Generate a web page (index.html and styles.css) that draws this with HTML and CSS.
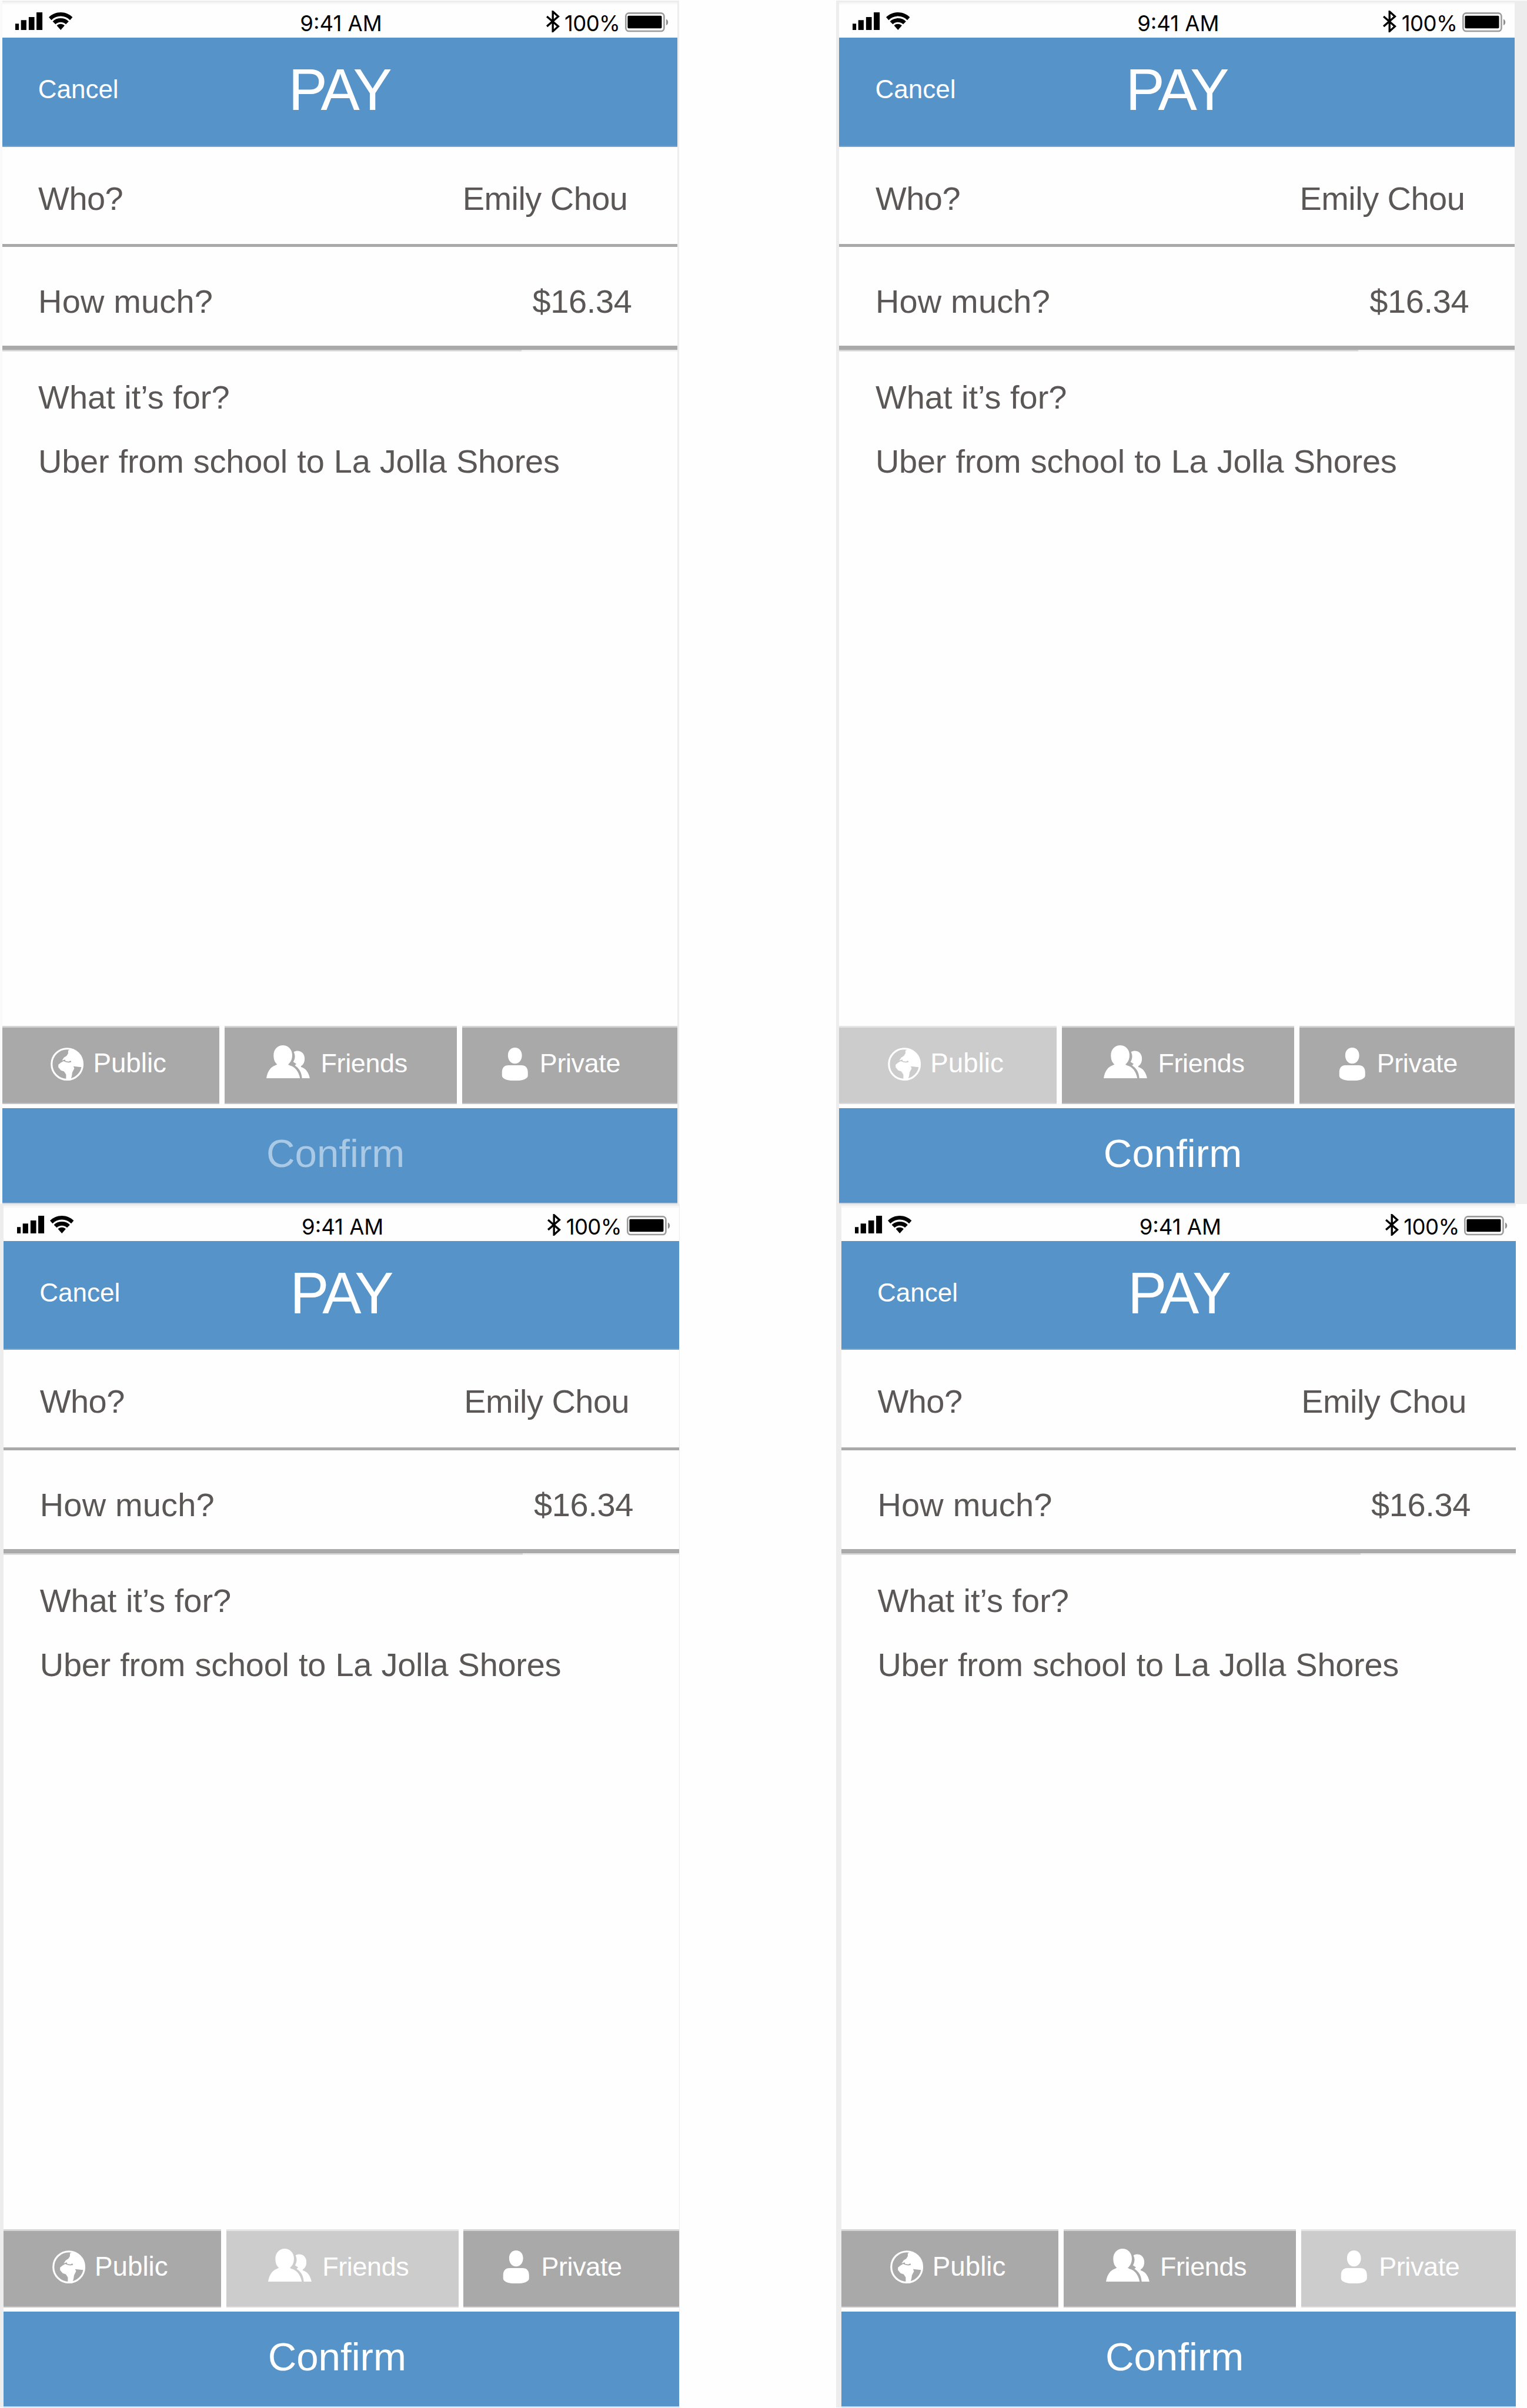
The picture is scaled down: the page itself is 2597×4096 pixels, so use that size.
FILE: index.html
```html
<!DOCTYPE html>
<html lang="en">
<head>
<meta charset="utf-8">
<title>Pay</title>
<link rel="stylesheet" href="styles.css">
</head>
<body>
<svg class="defs" aria-hidden="true">
  <symbol id="signal" viewBox="0 0 53 34"><path d="M0 22h7v12H0zM11 15h10.500v19H11zM26 9h11v25H26zM41 0h11.500v34H41z"/></symbol>
  <symbol id="wifi" viewBox="0 0 46 34"><path d="M23 0C14 0 6 3.500 0 9.500l5 5.500C10 10 16 7.500 23 7.500S36 10 41 15l5-5.500C40 3.500 32 0 23 0zM23 11.500c-6 0-11.500 2-15.500 6l5.500 5.500c2.500-2.500 6-4 10-4s7.500 1.500 10 4l5.500-5.500c-4-4-9.500-6-15.500-6zM23 22.500c-3 0-5.500 1-7.500 3L23 34l7.500-8.500c-2-2-4.500-3-7.500-3z"/></symbol>
  <symbol id="bluetooth" viewBox="0 0 30 44"><path d="M3 12l23 20-11 10V2l11 10L3 32" fill="none" stroke="currentColor" stroke-width="4"/></symbol>
  <symbol id="battery" viewBox="0 0 84 38"><rect x="1.500" y="1.500" width="74" height="35" rx="6" fill="none" stroke="#9b9b9b" stroke-width="3"/><rect x="5" y="6.500" width="66" height="24.500" rx="2"/><path d="M79.500 13c5 2 5 10 0 12z" fill="#8e8e8e"/></symbol>
  <symbol id="globe" viewBox="0 0 64 64"><circle cx="32" cy="32" r="30" fill="none" stroke="currentColor" stroke-width="3.600"/><path d="M34 6v5l-3 5-5 3-4 6 6-2 1 3 6 1 4-2 1 3-5 1-5-1-5-2-5 3-5 4v5l5 6 6 2 4 6v11h8l3-8 1-7 4-8-2-4 8 1 10 1A30 30 0 0 0 38 3z"/></symbol>
  <symbol id="friends" viewBox="0 0 86 64"><path d="M53 13c8-5 21-1 21 13 0 7-3 12-7 14v2c9 2 15 11 17 22H69c-1-9-3-15-9-21l-5-4 3-3-6-4c4-6 4-13 1-19z"/><path d="M32 0c10 0 18 8 18 19 0 8-3 14-8 18l3 2c10 2 18 12 20 25H0c2-13 8-22 17-25l4-2c-5-4-7-10-7-18C14 8 22 0 32 0z"/></symbol>
  <symbol id="person" viewBox="0 0 54 64"><path d="M27 0c8 0 13.500 6 13.500 15S35 31 27 31s-13.500-7-13.500-16S19 0 27 0zM15 34h24c9 0 13 5 13 14v6c0 6-9 10-25 10S2 60 2 54v-6c0-9 4-14 13-14z"/></symbol>
</svg>
<main class="board">
  <div class="cell cell-a">
    <section class="phone">
      <div class="status"><svg class="signal"><use href="#signal"/></svg><svg class="wifi"><use href="#wifi"/></svg><span class="time">9:41 AM</span><svg class="bluetooth"><use href="#bluetooth"/></svg><span class="charge">100%</span><svg class="battery"><use href="#battery"/></svg></div>
      <header class="header"><a class="cancel">Cancel</a><h1 class="title">PAY</h1></header>
      <div class="row who"><span>Who?</span><span>Emily Chou</span></div>
      <div class="row amount"><span>How much?</span><span>$16.34</span></div>
      <div class="note"><p class="ask">What it’s for?</p><p class="answer">Uber from school to La Jolla Shores</p></div>
      <div class="tabs">
        <div class="tab public"><svg><use href="#globe"/></svg><span>Public</span></div>
        <div class="tab friends"><svg><use href="#friends"/></svg><span>Friends</span></div>
        <div class="tab private"><svg><use href="#person"/></svg><span>Private</span></div>
      </div>
      <div class="confirm disabled">Confirm</div>
    </section>
  </div>
  <div class="cell cell-b">
    <section class="phone">
      <div class="status"><svg class="signal"><use href="#signal"/></svg><svg class="wifi"><use href="#wifi"/></svg><span class="time">9:41 AM</span><svg class="bluetooth"><use href="#bluetooth"/></svg><span class="charge">100%</span><svg class="battery"><use href="#battery"/></svg></div>
      <header class="header"><a class="cancel">Cancel</a><h1 class="title">PAY</h1></header>
      <div class="row who"><span>Who?</span><span>Emily Chou</span></div>
      <div class="row amount"><span>How much?</span><span>$16.34</span></div>
      <div class="note"><p class="ask">What it’s for?</p><p class="answer">Uber from school to La Jolla Shores</p></div>
      <div class="tabs">
        <div class="tab public selected"><svg><use href="#globe"/></svg><span>Public</span></div>
        <div class="tab friends"><svg><use href="#friends"/></svg><span>Friends</span></div>
        <div class="tab private"><svg><use href="#person"/></svg><span>Private</span></div>
      </div>
      <div class="confirm">Confirm</div>
    </section>
  </div>
  <div class="cell cell-c">
    <section class="phone">
      <div class="status"><svg class="signal"><use href="#signal"/></svg><svg class="wifi"><use href="#wifi"/></svg><span class="time">9:41 AM</span><svg class="bluetooth"><use href="#bluetooth"/></svg><span class="charge">100%</span><svg class="battery"><use href="#battery"/></svg></div>
      <header class="header"><a class="cancel">Cancel</a><h1 class="title">PAY</h1></header>
      <div class="row who"><span>Who?</span><span>Emily Chou</span></div>
      <div class="row amount"><span>How much?</span><span>$16.34</span></div>
      <div class="note"><p class="ask">What it’s for?</p><p class="answer">Uber from school to La Jolla Shores</p></div>
      <div class="tabs">
        <div class="tab public"><svg><use href="#globe"/></svg><span>Public</span></div>
        <div class="tab friends selected"><svg><use href="#friends"/></svg><span>Friends</span></div>
        <div class="tab private"><svg><use href="#person"/></svg><span>Private</span></div>
      </div>
      <div class="confirm">Confirm</div>
    </section>
  </div>
  <div class="cell cell-d">
    <section class="phone">
      <div class="status"><svg class="signal"><use href="#signal"/></svg><svg class="wifi"><use href="#wifi"/></svg><span class="time">9:41 AM</span><svg class="bluetooth"><use href="#bluetooth"/></svg><span class="charge">100%</span><svg class="battery"><use href="#battery"/></svg></div>
      <header class="header"><a class="cancel">Cancel</a><h1 class="title">PAY</h1></header>
      <div class="row who"><span>Who?</span><span>Emily Chou</span></div>
      <div class="row amount"><span>How much?</span><span>$16.34</span></div>
      <div class="note"><p class="ask">What it’s for?</p><p class="answer">Uber from school to La Jolla Shores</p></div>
      <div class="tabs">
        <div class="tab public"><svg><use href="#globe"/></svg><span>Public</span></div>
        <div class="tab friends"><svg><use href="#friends"/></svg><span>Friends</span></div>
        <div class="tab private selected"><svg><use href="#person"/></svg><span>Private</span></div>
      </div>
      <div class="confirm">Confirm</div>
    </section>
  </div>
</main>
</body>
</html>
```

FILE: styles.css
```css
/* 1rem = 100 design units */
html { font-size: 88px; }
* { box-sizing: border-box; }
body { margin: 0; background: #fefefe; font-family: "Liberation Sans", Arial, sans-serif; color: #5c5757; overflow: hidden; }
p, h1 { margin: 0; font-weight: 400; }
svg { display: block; flex: none; fill: currentColor; overflow: visible; }
span { white-space: nowrap; }
.defs { width: 0; height: 0; float: left; }

.board { display: grid; grid-template-columns: 16.16rem 13.35rem; grid-template-rows: 23.26rem 23.26rem; padding-top: 1px; width: 2597px; height: 4096px; }
.cell { display: flex; align-items: flex-start; }
.cell::before, .cell::after { content: ""; align-self: stretch; background: #ededed; flex: none; }
.cell-a::before { width: .04rem; background: #fafafa; }
.cell-a::after { width: .04rem; }
.cell-b::before { width: .06rem; }
.cell-b::after { flex: 1; }
.cell-c::before { width: .07rem; }
.cell-c::after { width: 1px; }
.cell-d::before { width: .1rem; }

.phone { width: 13.05rem; height: 23.26rem; flex: none; display: flex; flex-direction: column; background: #fefefe; border-top: .04rem solid #ededed; }
.cell-d .phone { width: 13.04rem; }

.status { height: .68rem; display: flex; color: #000; box-shadow: inset 0 .04rem #f7f7f7; font-family: Inter, "Liberation Sans", sans-serif; font-size: .415rem; line-height: .82rem; flex: none; }
.signal { width: .53rem; height: .34rem; margin: .19rem 0 0 .26rem; }
.wifi { width: .46rem; height: .34rem; margin: .19rem 0 0 .11rem; }
.time { width: 1.6rem; margin-left: 4.4rem; }
.bluetooth { width: .3rem; height: .42rem; margin: .155rem 0 0 3.13rem; }
.charge { width: 1.17rem; margin-left: .08rem; letter-spacing: -.007rem; }
.battery { width: .84rem; height: .38rem; margin-top: .19rem; }

.header { height: 2.11rem; flex: none; display: grid; grid-template-columns: 4.84rem 1fr; padding-left: .695rem; background: #5593c9; color: #fff; border-bottom: .03rem solid #74a6d2; }
.cancel { font-size: .5rem; line-height: 1.994rem; }
.title { font-size: 1.13rem; line-height: 2.02rem; letter-spacing: -.045rem; }

.row { display: flex; justify-content: space-between; align-items: flex-start; flex: none; padding-left: .7rem; font-size: .636rem; }
.who { height: 1.935rem; border-bottom: .068rem solid #a9a9a9; line-height: 2rem; padding-right: .96rem; letter-spacing: -.006rem; }
.amount { height: 1.99rem; border-bottom: .08rem solid #a9a9a9; line-height: 2.11rem; padding-right: .88rem; }
.amount span:first-child { letter-spacing: .002rem; }
.amount span:last-child { letter-spacing: -.004rem; }
/* the soft lower edge of the second rule is darker on its left part */
.note { flex: 1; padding-left: .7rem; font-size: .636rem; background: linear-gradient(90deg, #d4d4d4 10.03rem, #ececec 0) 0 0 / 100% .03rem no-repeat; }
.ask { line-height: 1.85rem; }
.answer { line-height: .604rem; word-spacing: .012rem; letter-spacing: -.003rem; }

.tabs { height: 1.51rem; flex: none; display: grid; grid-template-columns: 4.2rem 4.49rem 1fr; column-gap: .1rem; margin-bottom: .08rem; }
.tab { display: flex; align-items: flex-start; background: #a9a9a9; border-top: .04rem solid rgba(255, 255, 255, .5); border-bottom: .03rem solid rgba(255, 255, 255, .3); color: #fff; font-size: .51rem; line-height: 1.38rem; }
.selected { background: #ccc; }
.public { padding-left: .94rem; }
.public svg { width: .64rem; height: .64rem; margin: .38rem .18rem 0 0; }
.public span { font-size: .52rem; }
.friends { padding-left: .81rem; }
.friends svg { width: .86rem; height: .64rem; margin: .34rem .19rem 0 0; }
.friends span { letter-spacing: -.004rem; }
.private { padding-left: .75rem; }
.private svg { width: .54rem; height: .64rem; margin: .38rem .21rem 0 0; }
.private span { letter-spacing: -.004rem; }

.confirm { height: 1.85rem; flex: none; background: #5593c9; border-bottom: .03rem solid #c4d5e5; color: #fff; font-size: .764rem; line-height: 1.76rem; text-align: center; padding-right: .16rem; }
.disabled { color: #a9c9e5; }
```
